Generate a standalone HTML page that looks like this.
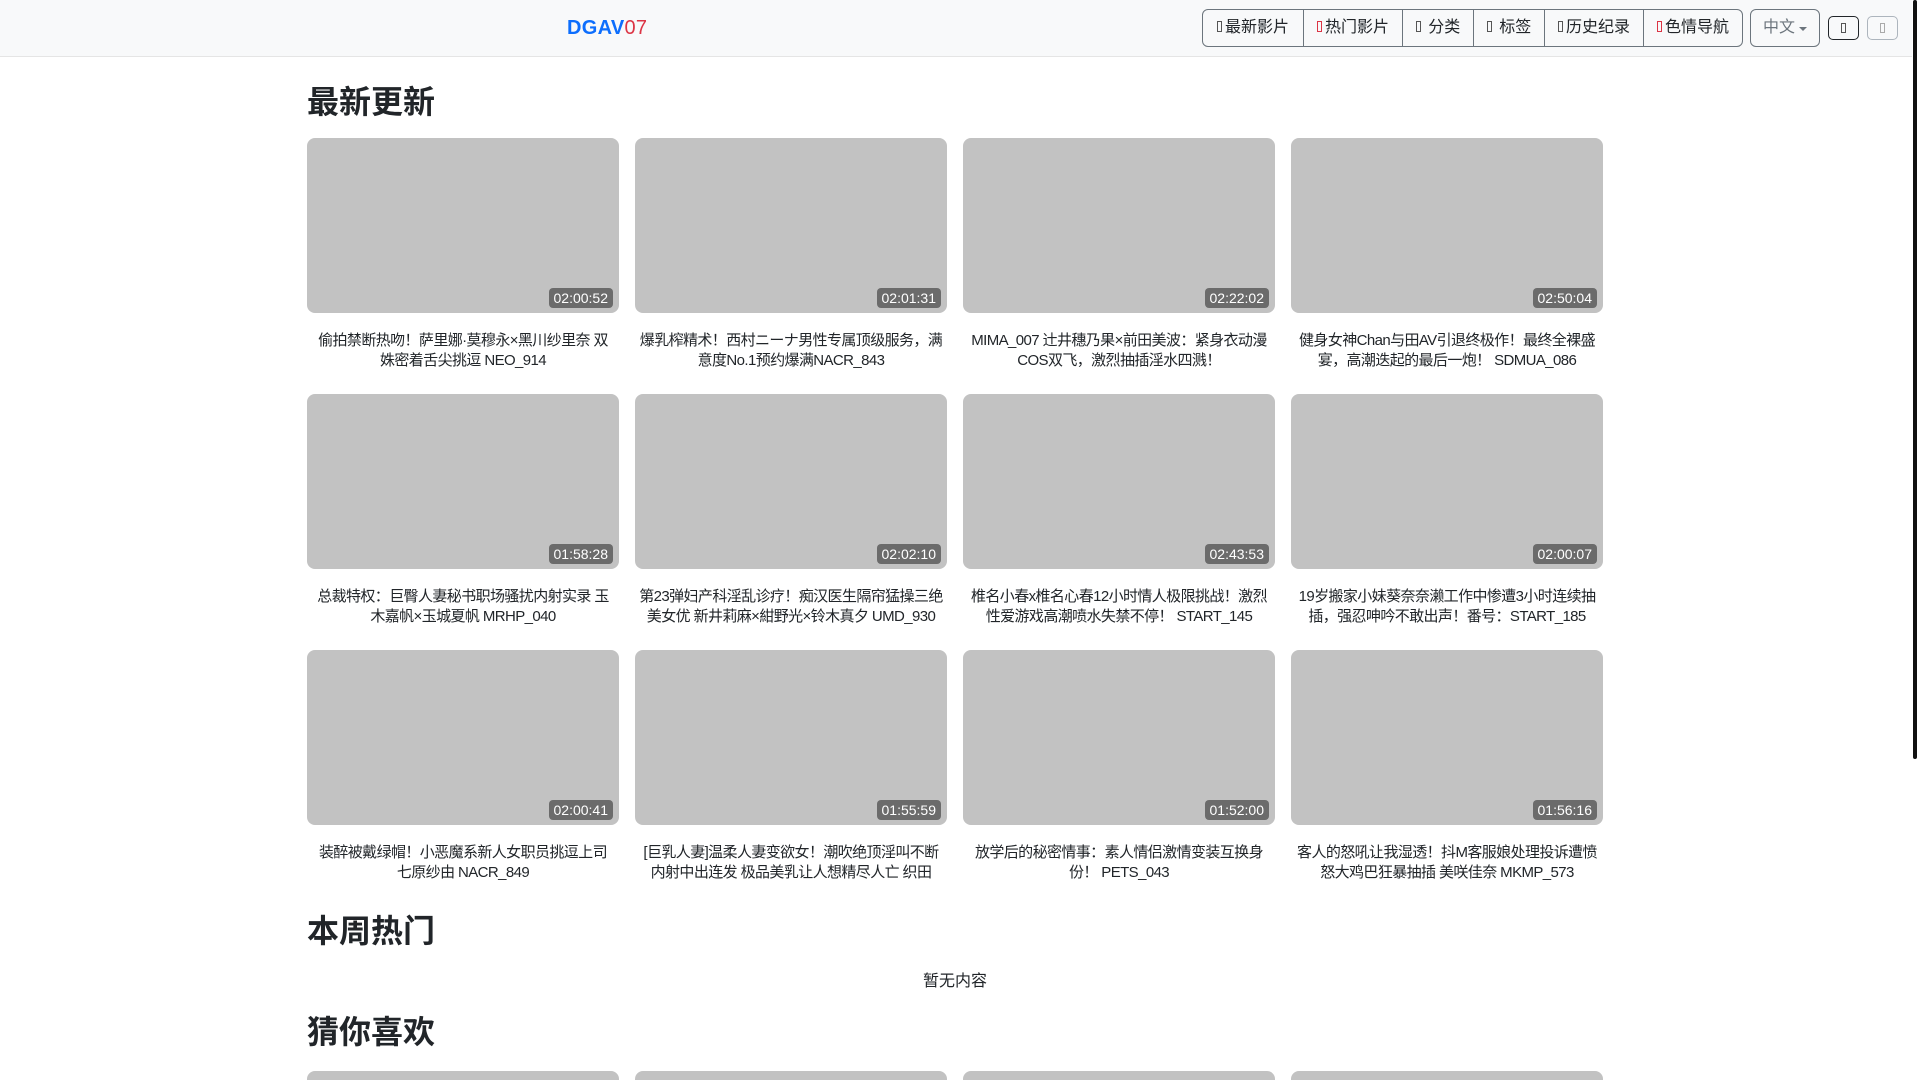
<!DOCTYPE html>
<html><head><meta charset="utf-8"><style>
*{box-sizing:border-box;margin:0;padding:0}
html{overflow:hidden;height:1080px}
body{width:1920px;height:1080px;overflow:hidden;background:#fff;font-family:"Liberation Sans","Noto Sans CJK SC",sans-serif;color:#212529;position:relative}
.nav{position:absolute;left:0;top:0;width:1912px;height:57px;background:#f8f9fa;border-bottom:1px solid #e5e5e5}
.logo{position:absolute;left:567px;top:17px;font-size:20px;font-weight:bold;color:#0d6efd;letter-spacing:.3px}
.logo span{color:#dc3545;font-weight:normal}
.grp{position:absolute;left:1202px;top:9px;height:38px;display:flex;border:1px solid #6c757d;border-radius:6px;overflow:hidden}
.grp div{height:36px;line-height:36px;font-size:16px;text-align:center;border-left:1px solid #6c757d;white-space:nowrap}
.grp div:first-child{border-left:none}
.t{display:inline-block;width:5px;height:11px;border:1px solid #555;margin-right:3px;vertical-align:0}
.r{border-color:#dc3545}
.lang{position:absolute;left:1750px;top:9px;width:70px;height:38px;border:1px solid #6c757d;border-radius:6px;font-size:16px;color:#6c757d;line-height:36px;padding-left:12px}
.lang:after{content:"";position:absolute;right:12px;top:17px;border:4px solid transparent;border-top-color:#6c757d}
.sb{position:absolute;top:16px;width:31px;height:24px;border:1px solid #212529;border-radius:5px}
.sb i{position:absolute;left:12px;top:6px;width:5px;height:10px;border:1px solid #555}
.scroll{position:absolute;left:1913px;top:0;width:4px;height:759px;background:#111;border-radius:2px}
h2{position:absolute;left:307px;font-size:32px;font-weight:bold;line-height:38px}
.card{position:absolute;width:312px}
.th{height:175px;background:#c2c2c2;border-radius:8px;position:relative}
.d{position:absolute;right:6px;bottom:5px;background:#6b6b6b;color:#fff;font-size:14px;padding:2px 5px;border-radius:4px;line-height:16px}
.ti{margin-top:18px;font-size:15px;line-height:20px;text-align:center;padding:0 4px;height:40px;overflow:hidden;color:#212529;letter-spacing:-0.6px}
</style></head><body>
<div class="nav">
<div class="logo">DGAV<span>07</span></div>
<div class="grp">
<div style="width:100px"><i class="t"></i>最新影片</div>
<div style="width:99px"><i class="t r"></i>热门影片</div>
<div style="width:71px"><i class="t"></i> 分类</div>
<div style="width:71px"><i class="t"></i> 标签</div>
<div style="width:99px"><i class="t"></i>历史纪录</div>
<div style="width:99px"><i class="t r"></i>色情导航</div>
</div>
<div class="lang">中文</div>
<div class="sb" style="left:1828px"><i></i></div>
<div class="sb" style="left:1867px;border-color:#adb5bd"><i style="border-color:#aaa"></i></div>
</div>
<div class="scroll"></div>
<h2 style="top:83px">最新更新</h2>
<h2 style="top:912px">本周热门</h2>
<div style="position:absolute;left:307px;width:1296px;top:967px;text-align:center;font-size:16px">暂无内容</div>
<h2 style="top:1013px">猜你喜欢</h2>

<div class="card" style="left:307px;top:138px"><div class="th"><span class="d">02:00:52</span></div><div class="ti">偷拍禁断热吻！萨里娜·莫穆永×黑川纱里奈 双姝密着舌尖挑逗 NEO_914</div></div>
<div class="card" style="left:635px;top:138px"><div class="th"><span class="d">02:01:31</span></div><div class="ti">爆乳榨精术！西村ニーナ男性专属顶级服务，满意度No.1预约爆满NACR_843</div></div>
<div class="card" style="left:963px;top:138px"><div class="th"><span class="d">02:22:02</span></div><div class="ti">MIMA_007 辻井穗乃果×前田美波：紧身衣动漫COS双飞，激烈抽插淫水四溅！</div></div>
<div class="card" style="left:1291px;top:138px"><div class="th"><span class="d">02:50:04</span></div><div class="ti">健身女神Chan与田AV引退终极作！最终全裸盛宴，高潮迭起的最后一炮！ SDMUA_086</div></div>

<div class="card" style="left:307px;top:394px"><div class="th"><span class="d">01:58:28</span></div><div class="ti">总裁特权：巨臀人妻秘书职场骚扰内射实录 玉木嘉帆×玉城夏帆 MRHP_040</div></div>
<div class="card" style="left:635px;top:394px"><div class="th"><span class="d">02:02:10</span></div><div class="ti">第23弹妇产科淫乱诊疗！痴汉医生隔帘猛操三绝美女优 新井莉麻×紺野光×铃木真夕 UMD_930</div></div>
<div class="card" style="left:963px;top:394px"><div class="th"><span class="d">02:43:53</span></div><div class="ti">椎名小春x椎名心春12小时情人极限挑战！激烈性爱游戏高潮喷水失禁不停！ START_145</div></div>
<div class="card" style="left:1291px;top:394px"><div class="th"><span class="d">02:00:07</span></div><div class="ti">19岁搬家小妹葵奈奈濑工作中惨遭3小时连续抽插，强忍呻吟不敢出声！番号：START_185</div></div>

<div class="card" style="left:307px;top:650px"><div class="th"><span class="d">02:00:41</span></div><div class="ti">装醉被戴绿帽！小恶魔系新人女职员挑逗上司 七原纱由 NACR_849</div></div>
<div class="card" style="left:635px;top:650px"><div class="th"><span class="d">01:55:59</span></div><div class="ti">[巨乳人妻]温柔人妻变欲女！潮吹绝顶淫叫不断内射中出连发 极品美乳让人想精尽人亡 织田真...</div></div>
<div class="card" style="left:963px;top:650px"><div class="th"><span class="d">01:52:00</span></div><div class="ti">放学后的秘密情事：素人情侣激情变装互换身份！ PETS_043</div></div>
<div class="card" style="left:1291px;top:650px"><div class="th"><span class="d">01:56:16</span></div><div class="ti">客人的怒吼让我湿透！抖M客服娘处理投诉遭愤怒大鸡巴狂暴抽插 美咲佳奈 MKMP_573</div></div>

<div class="card" style="left:307px;top:1071px"><div class="th" style="height:9px;border-radius:8px 8px 0 0"></div></div>
<div class="card" style="left:635px;top:1071px"><div class="th" style="height:9px;border-radius:8px 8px 0 0"></div></div>
<div class="card" style="left:963px;top:1071px"><div class="th" style="height:9px;border-radius:8px 8px 0 0"></div></div>
<div class="card" style="left:1291px;top:1071px"><div class="th" style="height:9px;border-radius:8px 8px 0 0"></div></div>
</body></html>
